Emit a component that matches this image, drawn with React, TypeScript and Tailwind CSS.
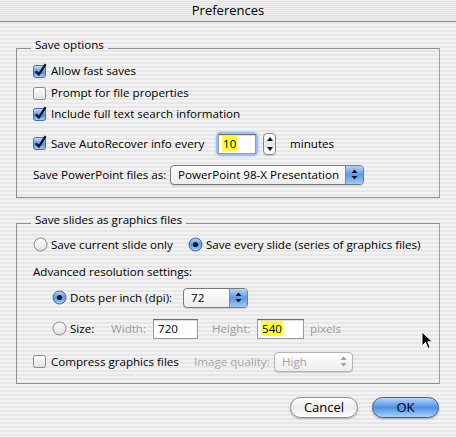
import React from "react";

const stripes =
  "bg-[repeating-linear-gradient(to_bottom,#f3f3f3_0px,#f3f3f3_2px,#e7e7e7_2px,#e7e7e7_4px)]";

function CheckBox({ checked }: { checked: boolean }) {
  return (
    <svg width="16" height="16" viewBox="0 0 16 16" className="shrink-0">
      <defs>
        <linearGradient id="cbOn" x1="0" y1="0" x2="0" y2="1">
          <stop offset="0" stopColor="#c9e0fb" />
          <stop offset="0.45" stopColor="#6fa2e6" />
          <stop offset="0.55" stopColor="#4f8ce0" />
          <stop offset="1" stopColor="#a8d0f8" />
        </linearGradient>
        <linearGradient id="cbOff" x1="0" y1="0" x2="0" y2="1">
          <stop offset="0" stopColor="#ffffff" />
          <stop offset="1" stopColor="#e2e2e2" />
        </linearGradient>
      </defs>
      <rect
        x="0.5"
        y="2.5"
        width="12"
        height="12"
        rx="2"
        fill={checked ? "url(#cbOn)" : "url(#cbOff)"}
        stroke={checked ? "#4b6e9c" : "#8a8a8a"}
      />
      {checked && (
        <path
          d="M2.8 8.2 L5.8 11.6 L12.6 1.2"
          stroke="#0d1522"
          strokeWidth="2.3"
          fill="none"
          strokeLinejoin="round"
        />
      )}
    </svg>
  );
}

function Radio({ on }: { on: boolean }) {
  return (
    <svg width="15" height="15" viewBox="0 0 15 15" className="shrink-0">
      <defs>
        <linearGradient id="rOn" x1="0" y1="0" x2="0" y2="1">
          <stop offset="0" stopColor="#bcd8fa" />
          <stop offset="0.5" stopColor="#5d97e4" />
          <stop offset="1" stopColor="#a9d0f8" />
        </linearGradient>
        <linearGradient id="rOff" x1="0" y1="0" x2="0" y2="1">
          <stop offset="0" stopColor="#ffffff" />
          <stop offset="1" stopColor="#dedede" />
        </linearGradient>
      </defs>
      <circle
        cx="7.5"
        cy="7.5"
        r="6.5"
        fill={on ? "url(#rOn)" : "url(#rOff)"}
        stroke={on ? "#45699b" : "#8c8c8c"}
      />
      {on && <circle cx="7.5" cy="7.5" r="2.6" fill="#0e1a30" />}
    </svg>
  );
}

function PopArrows({ color }: { color: string }) {
  return (
    <svg width="7" height="11" viewBox="0 0 7 11">
      <path d="M3.5 0.5 L6.5 4 L0.5 4 Z" fill={color} />
      <path d="M3.5 10.5 L6.5 7 L0.5 7 Z" fill={color} />
    </svg>
  );
}

function Popup({
  label,
  width,
  disabled,
}: {
  label: string;
  width: string;
  disabled?: boolean;
}) {
  return (
    <div
      className={`${width} h-[20px] flex rounded-[4px] border ${
        disabled ? "border-[#b5b5b5]" : "border-[#7a7a7a]"
      } bg-gradient-to-b from-white to-[#ececec] shadow-[0_1px_1px_rgba(0,0,0,0.15)] overflow-hidden`}
    >
      <div
        className={`flex-1 flex items-center pl-[7px] ${
          disabled ? "text-[#a4a4a4]" : "text-black"
        }`}
      >
        {label}
      </div>
      <div
        className={`w-[18px] flex items-center justify-center ${
          disabled
            ? ""
            : "bg-gradient-to-b from-[#b5d3f6] via-[#5f98e2] to-[#9fcaf6] border-l border-[#6a8fbd]"
        }`}
      >
        <PopArrows color={disabled ? "#a0a0a0" : "#111"} />
      </div>
    </div>
  );
}

function Field({
  value,
  width,
  highlight,
}: {
  value: string;
  width: string;
  highlight?: boolean;
}) {
  return (
    <div
      className={`${width} h-[20px] bg-white border border-[#9a9a9a] border-t-[#6e6e6e] shadow-[inset_0_1px_1px_rgba(0,0,0,0.15)] flex items-center pl-[3px]`}
    >
      <span className={highlight ? "bg-[#ffff33] leading-[15px] px-[1px]" : "px-[1px]"}>
        {value}
      </span>
    </div>
  );
}

function Stepper() {
  return (
    <div className="w-[13px] h-[22px] rounded-[4px] border border-[#8a8a8a] bg-gradient-to-b from-white via-[#e8e8e8] to-white flex flex-col items-center justify-between py-[3px] shadow-[0_1px_1px_rgba(0,0,0,0.15)]">
      <svg width="6" height="4" viewBox="0 0 6 4">
        <path d="M3 0 L6 4 L0 4 Z" fill="#111" />
      </svg>
      <svg width="6" height="4" viewBox="0 0 6 4">
        <path d="M3 4 L6 0 L0 0 Z" fill="#111" />
      </svg>
    </div>
  );
}

function Group({
  title,
  children,
  className,
}: {
  title: string;
  children: React.ReactNode;
  className?: string;
}) {
  return (
    <fieldset
      className={`mx-[16px] w-[424px] border border-[#8f8f8f] border-r-[#a0a0a0] ${className ?? ""}`}
    >
      <legend className="ml-[14px] px-[4px] leading-[16px] pb-[6px]">{title}</legend>
      {children}
    </fieldset>
  );
}

export default function App() {
  return (
    <div
      className={`relative w-[456px] h-[437px] overflow-hidden whitespace-nowrap ${stripes} font-['Open_Sans',sans-serif] text-[11.6px] text-black`}
    >
      {/* title bar */}
      <div className="h-[22px] border-b border-[#8a8a8a] flex items-center justify-center text-[13px] bg-[repeating-linear-gradient(to_bottom,#efefef_0px,#efefef_1px,#e2e2e2_1px,#e2e2e2_2px)]">
        Preferences
      </div>

      <Group title="Save options" className="mt-[15px] pb-[12px]">
        <div className="pl-[16px] pt-[1px]">
          <div className="h-[22px] flex items-center gap-[2px]">
            <CheckBox checked />
            <span>Allow fast saves</span>
          </div>
          <div className="h-[21px] flex items-center gap-[2px]">
            <CheckBox checked={false} />
            <span>Prompt for file properties</span>
          </div>
          <div className="h-[21px] flex items-center gap-[2px]">
            <CheckBox checked />
            <span>Include full text search information</span>
          </div>
          <div className="mt-[9px] h-[21px] flex items-center">
            <div className="w-[185px] flex items-center gap-[2px]">
              <CheckBox checked />
              <span>Save AutoRecover info every</span>
            </div>
            <div className="rounded-[3px] shadow-[0_0_0_2px_#9cc0ee,0_0_2px_3px_#c6dcf5]">
              <Field value="10" width="w-[38px]" highlight />
            </div>
            <div className="ml-[7px]">
              <Stepper />
            </div>
            <span className="ml-[14px]">minutes</span>
          </div>
          <div className="mt-[10px] h-[21px] flex items-center">
            <span className="w-[137px]">Save PowerPoint files as:</span>
            <Popup label="PowerPoint 98-X Presentation" width="w-[194px]" />
          </div>
        </div>
      </Group>

      <Group title="Save slides as graphics files" className="mt-[14px] pb-[11px]">
        <div className="pl-[16px] pt-[1px]">
          <div className="h-[20px] flex items-center">
            <div className="w-[155px] flex items-center gap-[3px]">
              <Radio on={false} />
              <span>Save current slide only</span>
            </div>
            <div className="flex items-center gap-[3px]">
              <Radio on />
              <span>Save every slide (series of graphics files)</span>
            </div>
          </div>
          <div className="mt-[7px] h-[20px] flex items-center">Advanced resolution settings:</div>
          <div className="mt-[5px] h-[21px] flex items-center pl-[19px]">
            <div className="w-[131px] flex items-center gap-[3px]">
              <Radio on />
              <span>Dots per inch (dpi):</span>
            </div>
            <Popup label="72" width="w-[65px]" />
          </div>
          <div className="mt-[10px] h-[21px] flex items-center pl-[19px]">
            <div className="w-[59px] flex items-center gap-[3px]">
              <Radio on={false} />
              <span>Size:</span>
            </div>
            <span className="w-[42px] text-[#9c9c9c]">Width:</span>
            <Field value="720" width="w-[45px]" />
            <span className="ml-[14px] w-[45px] text-[#9c9c9c]">Height:</span>
            <Field value="540" width="w-[47px]" highlight />
            <span className="ml-[6px] text-[#9c9c9c]">pixels</span>
          </div>
          <div className="mt-[12px] h-[21px] flex items-center">
            <div className="w-[161px] flex items-center gap-[2px]">
              <CheckBox checked={false} />
              <span>Compress graphics files</span>
            </div>
            <span className="w-[80px] text-[#a6a6a6]">Image quality:</span>
            <Popup label="High" width="w-[79px]" disabled />
          </div>
        </div>
      </Group>

      <div className="mt-[13px] flex justify-end gap-[14px] pr-[17px]">
        <button className="w-[68px] h-[21px] rounded-full border border-[#8a8a8a] bg-gradient-to-b from-white via-[#ececec] to-white shadow-[0_1px_2px_rgba(0,0,0,0.25)] text-[13px] leading-none">
          Cancel
        </button>
        <button className="w-[67px] h-[21px] rounded-full border border-[#3d5f95] bg-gradient-to-b from-[#b8d6fb] via-[#4f8fe4] to-[#a7d4fb] shadow-[0_1px_2px_rgba(0,0,0,0.3)] text-[13px] leading-none">
          OK
        </button>
      </div>

      {/* mouse cursor */}
      <svg
        className="absolute left-[421px] top-[331px]"
        width="13"
        height="19"
        viewBox="0 0 13 19"
      >
        <path
          d="M1 1 L1 15 L4.5 11.5 L7 17.5 L9.2 16.5 L6.8 10.8 L11.5 10.8 Z"
          fill="#000"
          stroke="#fff"
          strokeWidth="1"
        />
      </svg>
    </div>
  );
}
